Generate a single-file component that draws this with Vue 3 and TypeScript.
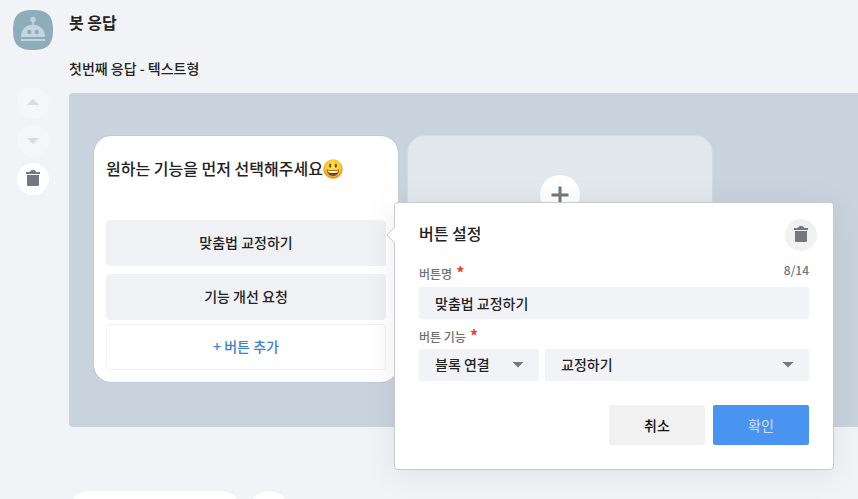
<script setup lang="ts">
import { computed, ref } from 'vue'

interface BotButton {
  id: number
  label: string
}

const MAX_LABEL = 14

const buttons = ref<BotButton[]>([
  { id: 1, label: '맞춤법 교정하기' },
  { id: 2, label: '기능 개선 요청' },
])
const activeId = ref<number | null>(1)
const draft = ref('맞춤법 교정하기')
const action = ref('블록 연결')
const target = ref('교정하기')

const counter = computed(() => `${draft.value.length}/${MAX_LABEL}`)

function open(button: BotButton) {
  activeId.value = button.id
  draft.value = button.label
}

function close() {
  activeId.value = null
}

function save() {
  const current = buttons.value.find((b) => b.id === activeId.value)
  if (current) current.label = draft.value
  close()
}

function remove() {
  buttons.value = buttons.value.filter((b) => b.id !== activeId.value)
  close()
}

function add() {
  buttons.value.push({ id: Date.now(), label: '새 버튼' })
}
</script>

<template>
  <div class="page">
    <aside class="rail">
      <svg class="avatar" viewBox="0 0 40 40" role="img" aria-label="봇">
        <path
          d="M20 0C34.500 0 40 5.500 40 20S34.500 40 20 40 0 34.500 0 20 5.500 0 20 0Z"
          fill="#8eadba"
        />
        <g fill="#c5d5de">
          <circle cx="20" cy="9.500" r="2.700" />
          <path d="M19.200 11h1.600v5h-1.600z" />
          <path d="M8 27C8 19.500 13 14.700 20 14.700S32 19.500 32 27Z" />
          <path d="M8 29h24v2H8z" />
        </g>
        <circle cx="16.300" cy="22" r="2.200" fill="#8eadba" />
        <circle cx="23.700" cy="22" r="2.200" fill="#8eadba" />
      </svg>
      <div class="tools">
        <button class="round faint" type="button" aria-label="위로" disabled>
          <svg class="icon" viewBox="0 0 24 24"><path d="M5.700 14L12 7.700l6.300 6.300z" /></svg>
        </button>
        <button class="round faint" type="button" aria-label="아래로" disabled>
          <svg class="icon" viewBox="0 0 24 24"><path d="M5.700 9l6.300 6.300L18.300 9z" /></svg>
        </button>
        <button class="round" type="button" aria-label="응답 삭제">
          <svg class="icon" viewBox="0 0 24 24">
            <path d="M5 7V5h4l0.500-1q0.500-1 1.500-1h2q1 0 1.500 1l0.500 1h4v2zM6 8h12v10q0 1-1 1H7q-1 0-1-1z" />
          </svg>
        </button>
      </div>
    </aside>

    <main class="main">
      <h1 class="title">봇 응답</h1>
      <h2 class="subtitle">첫번째 응답 - 텍스트형</h2>

      <section class="board">
        <article class="card">
          <p class="message">
            <span>원하는 기능을 먼저 선택해주세요</span>
            <svg class="emoji" viewBox="0 0 20 20" role="img" aria-label="웃는 얼굴">
              <defs>
                <radialGradient id="face" cx="50%" cy="42%" r="56%">
                  <stop offset="0" stop-color="#ffe93e" />
                  <stop offset="0.650" stop-color="#fdcc30" />
                  <stop offset="1" stop-color="#e58a1c" />
                </radialGradient>
              </defs>
              <circle cx="10" cy="10" r="9.700" fill="url(#face)" />
              <ellipse cx="7.200" cy="6.600" rx="1.100" ry="2.200" fill="#70420f" />
              <ellipse cx="12.800" cy="6.600" rx="1.100" ry="2.200" fill="#70420f" />
              <path d="M3.800 10.500Q10 12.200 16.200 10.500Q15.700 17 10 17T3.800 10.500Z" fill="#80420c" />
              <path d="M4.600 11.400Q10 12.800 15.400 11.400L14.800 13.300Q10 14.600 5.200 13.300Z" fill="#fff" />
            </svg>
          </p>
          <div class="choices">
            <div v-for="button in buttons" :key="button.id" class="choice">
              <button class="choice-button" type="button" @click="open(button)">
                {{ button.label }}
              </button>

              <form v-if="button.id === activeId" class="popover" @submit.prevent="save">
                <svg class="arrow" viewBox="0 0 9 16" aria-hidden="true">
                  <path class="arrow-fill" d="M9 0.500L1 8l8 7.500z" />
                  <path class="arrow-line" d="M8.500 0.500L0.700 8l7.800 7.500" />
                </svg>
                <header class="popover-head">
                  <h3 class="popover-title">버튼 설정</h3>
                  <button class="round gray" type="button" aria-label="버튼 삭제" @click="remove">
                    <svg class="icon" viewBox="0 0 24 24">
                      <path d="M5 7V5h4l0.500-1q0.500-1 1.500-1h2q1 0 1.500 1l0.500 1h4v2zM6 8h12v10q0 1-1 1H7q-1 0-1-1z" />
                    </svg>
                  </button>
                </header>

                <div class="label-row">
                  <label for="button-name">버튼명 <span class="required">*</span></label>
                  <span class="counter">{{ counter }}</span>
                </div>
                <input id="button-name" v-model="draft" class="field" type="text" :maxlength="MAX_LABEL" />

                <div class="label-row second">
                  <label for="button-action">버튼 기능 <span class="required">*</span></label>
                </div>
                <div class="selects">
                  <div class="select-box">
                    <select id="button-action" v-model="action" class="field">
                      <option>블록 연결</option>
                    </select>
                    <svg class="caret" viewBox="0 0 12 6"><path d="M0.500 0h11L6 5.500z" /></svg>
                  </div>
                  <div class="select-box">
                    <select v-model="target" class="field" aria-label="연결할 블록">
                      <option>교정하기</option>
                    </select>
                    <svg class="caret" viewBox="0 0 12 6"><path d="M0.500 0h11L6 5.500z" /></svg>
                  </div>
                </div>

                <footer class="actions">
                  <button class="action" type="button" @click="close">취소</button>
                  <button class="action primary" type="submit">확인</button>
                </footer>
              </form>
            </div>
          </div>
          <button class="add-button" type="button" @click="add">+ 버튼 추가</button>
        </article>

        <div class="card blank">
          <button class="plus" type="button" aria-label="말풍선 추가">
            <svg viewBox="0 0 18 18"><path d="M7.500 0.500h3v7h7v3h-7v7h-3v-7h-7v-3h7z" /></svg>
          </button>
        </div>
      </section>

      <div class="next">
        <button class="pill" type="button" aria-label="응답 추가"></button>
        <button class="pill dot" type="button" aria-label="더 보기"></button>
      </div>
    </main>
  </div>
</template>

<style>
body {
  background: #f2f3f7;
}
</style>

<style scoped>
.page,
.page * {
  box-sizing: border-box;
}

.page {
  display: grid;
  grid-template-columns: 57px minmax(0, 1fr);
  column-gap: 12px;
  height: 100vh;
  overflow: hidden;
  background: #f2f3f7;
  color: #222;
  font-family: 'Noto Sans CJK KR', 'Noto Sans', sans-serif;
  font-size: 14px;
  font-weight: 500;
  line-height: 20px;
}

button,
input,
select {
  margin: 0;
  border: 0;
  color: inherit;
  font: inherit;
}

button {
  padding: 0;
  cursor: pointer;
}

h1,
h2,
h3,
p {
  margin: 0;
  font-weight: 500;
}

.rail {
  display: flex;
  flex-direction: column;
  align-items: flex-end;
  padding: 10px 4px 0 0;
}

.avatar {
  width: 40px;
  height: 40px;
}

.tools {
  display: flex;
  flex-direction: column;
  gap: 6px;
  padding: 37px 4px 0 0;
}

.round {
  display: flex;
  align-items: center;
  justify-content: center;
  width: 32px;
  height: 32px;
  border-radius: 50%;
  background: #fff;
  color: #757780;
}

.round.faint {
  background: #f5f6f9;
  color: #dcdde1;
}

.round.gray {
  background: #f1f1f1;
}

.icon {
  width: 24px;
  height: 24px;
  fill: currentColor;
}

.title {
  padding-top: 10px;
  font-size: 16px;
  font-weight: 700;
  line-height: 24px;
}

.subtitle {
  padding: 24px 0 15px;
  font-size: 14px;
}

.board {
  display: flex;
  gap: 8px;
  padding: 42px 24px 44px;
  border-radius: 4px 0 0 4px;
  background: #c9d3de;
}

.card {
  flex: none;
  width: 306px;
  padding: 20px 12px 12px;
  border: 1px solid #bfccda;
  border-radius: 18px;
  background: #fff;
  background-clip: padding-box;
}

.card.blank {
  display: flex;
  justify-content: center;
  align-items: flex-start;
  padding-top: 39px;
  border-color: #d3dce3;
  background: #e2e8eb;
}

.plus {
  display: flex;
  align-items: center;
  justify-content: center;
  width: 40px;
  height: 40px;
  border-radius: 50%;
  background: #fff;
  fill: #757780;
}

.plus svg {
  width: 18px;
  height: 18px;
}

.message {
  display: flex;
  align-items: flex-start;
  min-height: 64px;
  font-size: 16px;
  line-height: 24px;
}

.emoji {
  width: 20px;
  height: 26px;
}

.choices {
  display: flex;
  flex-direction: column;
  gap: 8px;
}

.choice {
  position: relative;
}

.choice-button,
.add-button {
  display: block;
  width: 100%;
  height: 46px;
  padding-bottom: 2px;
  border-radius: 4px;
  background: #eff1f4;
}

.add-button {
  margin-top: 4px;
  border: 1px solid #f0f1f4;
  background: #fff;
  color: #4380ca;
}

.popover {
  position: absolute;
  z-index: 2;
  top: -18px;
  left: calc(100% + 8px);
  width: 440px;
  padding: 16px 24px 24px;
  border: 1px solid #c8cacd;
  border-radius: 4px;
  background: #fff;
  box-shadow: 0 4px 32px rgba(0, 0, 0, 0.08);
}

.arrow {
  position: absolute;
  top: 24px;
  left: -9px;
  width: 9px;
  height: 16px;
}

.arrow-fill {
  fill: #fff;
}

.arrow-line {
  fill: none;
  stroke: #c8cacd;
}

.popover-head {
  display: flex;
  align-items: flex-start;
  justify-content: space-between;
  margin-right: -8px;
}

.popover-title {
  padding-top: 2px;
  font-size: 16px;
  line-height: 24px;
}

.label-row {
  display: flex;
  align-items: flex-start;
  justify-content: space-between;
  height: 36px;
  padding-top: 9px;
  color: #707070;
  font-size: 12px;
}

.label-row label {
  display: flex;
  gap: 4px;
  padding-top: 4px;
}

.label-row.second {
  height: 30px;
  padding-top: 4px;
}

.required {
  color: #e8412c;
  font-size: 16px;
  font-weight: 700;
  line-height: 16px;
}

.field {
  display: block;
  width: 100%;
  height: 32px;
  padding: 0 16px;
  border-radius: 2px;
  appearance: none;
  background: #f2f3f7;
  outline: none;
}

.selects {
  display: grid;
  grid-template-columns: 120px 1fr;
  gap: 6px;
}

.select-box {
  display: grid;
  align-items: center;
}

.select-box > * {
  grid-area: 1 / 1;
}

.select-box .field {
  padding-bottom: 2px;
}

.caret {
  justify-self: end;
  width: 12px;
  height: 6px;
  margin-right: 15px;
  fill: #77787b;
  pointer-events: none;
}

.actions {
  display: flex;
  justify-content: flex-end;
  gap: 8px;
  padding-top: 24px;
}

.action {
  width: 96px;
  height: 40px;
  border-radius: 2px;
  background: #f1f1f1;
  color: #111;
}

.action.primary {
  background: #4994f0;
  color: #d5dfea;
  font-weight: 400;
}

.next {
  display: flex;
  gap: 8px;
  padding-top: 64px;
}

.pill {
  width: 172px;
  height: 40px;
  border-radius: 20px;
  background: #fff;
}

.pill.dot {
  width: 40px;
}
</style>
